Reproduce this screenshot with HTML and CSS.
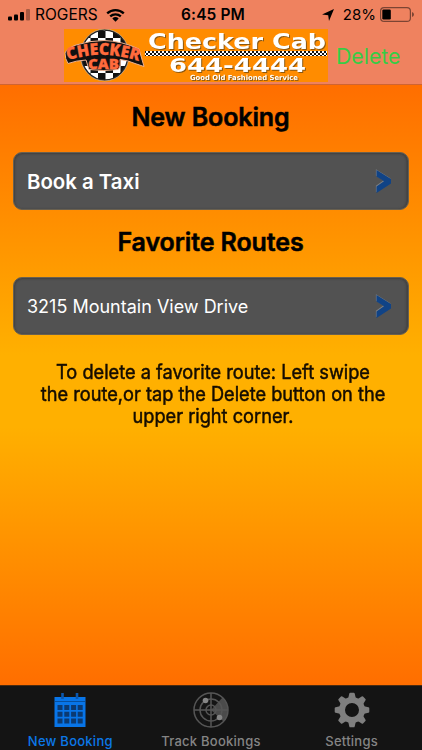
FILE: index.html
```
<!DOCTYPE html>
<html lang="en">
<head>
<meta charset="utf-8">
<title>Checker Cab</title>
<link rel="stylesheet" href="styles.css">
</head>
<body>
<div class="app">
  <header class="top">
    <div class="status">
      <div class="status-left">
        <svg class="signal" width="22" height="12" viewBox="0 0 22 12">
          <rect x="0" y="7.5" width="4" height="4" rx="1"/><rect x="6" y="5.5" width="4" height="6" rx="1"/><rect x="12" y="3" width="4" height="8.5" rx="1"/><rect x="18" y="0" width="4" height="11.5" rx="1" opacity=".3"/>
        </svg>
        <span class="carrier">ROGERS</span>
        <svg class="wifi" width="19" height="14" viewBox="0 0 19 14">
          <path d="M1.2 5.4a12 12 0 0 1 16.6 0M4.2 8.4a7.8 7.8 0 0 1 10.6 0" fill="none" stroke="#000" stroke-width="2.3"/>
          <path d="M6.3 10.4a4.8 4.8 0 0 1 6.4 0L9.5 13.7z"/>
        </svg>
      </div>
      <div class="clock">6:45 PM</div>
      <div class="status-right">
        <svg width="12" height="12" viewBox="0 0 12 12"><path d="M12 0L7 12L6.200 6.200L0 5.400z"/></svg>
        <span class="percent">28%</span>
        <svg class="battery" width="34" height="15" viewBox="0 0 34 15">
          <rect x=".6" y=".6" width="29.800" height="13.800" rx="3.500" fill="none" stroke="#7c4433" stroke-width="1.200"/>
          <rect x="2.300" y="2.500" width="8.500" height="10" rx="1.200"/>
          <path d="M32 5q2 .8 2 2.500t-2 2.500z" fill="#7c4433"/>
        </svg>
      </div>
    </div>
    <div class="nav">
      <svg class="banner" width="264" height="53" viewBox="0 0 264 53">
        <defs>
          <pattern id="flag" width="15" height="14" x="4" y="2" patternUnits="userSpaceOnUse"><rect width="15" height="14" fill="#fff"/><path d="M0 0h7.500v7H0zM7.500 7H15v7H7.500z" fill="#111"/></pattern>
          <pattern id="strip" width="4" height="4" y="22" patternUnits="userSpaceOnUse"><rect width="4" height="4" fill="#fff"/><path d="M0 0h2v2H0zM2 2h2v2H2z" fill="#111"/></pattern>
          <path id="arc" d="M4 31.500Q38 19.500 77 33"/>
        </defs>
        <rect width="264" height="53" fill="#ff8c00"/>
        <ellipse cx="40.700" cy="26" rx="23.400" ry="25" fill="url(#flag)" stroke="#222" stroke-width="1.600"/>
        <ellipse cx="40.700" cy="26" rx="24.300" ry="25.900" fill="none" stroke="#ccc" stroke-width=".5"/>
        <path d="M1 24Q3 19 12 16Q26 11.500 40 11.500Q58 12 75 20L80 37.500L71 34.500Q63 31 56 30.500Q57 38 54 40.500Q40 42.500 25 40.500L22 31Q12 31.500 4 34.500Q1 30 1 24z" fill="#111" stroke="#efb190" stroke-width="1" stroke-linejoin="round"/>
        <g class="badge"><text><textPath href="#arc" textLength="72" lengthAdjust="spacingAndGlyphs">CHECKER</textPath></text><text x="24" y="39.500" class="cab" textLength="31" lengthAdjust="spacingAndGlyphs">CAB</text></g>
        <rect x="81" y="22" width="182" height="5" fill="url(#strip)"/>
        <g class="banner-text">
          <text x="84" y="19.500" class="name" textLength="178" lengthAdjust="spacingAndGlyphs">Checker Cab</text>
          <text x="105" y="42.500" class="phone" textLength="137" lengthAdjust="spacingAndGlyphs">644-4444</text>
          <text x="126" y="51" class="slogan" textLength="108" lengthAdjust="spacingAndGlyphs">Good Old Fashioned Service</text>
        </g>
      </svg>
      <span class="delete">Delete</span>
    </div>
  </header>
  <main class="content">
    <h1 class="heading">New Booking</h1>
    <div class="card"><span class="book">Book a Taxi</span>
      <svg class="chevron" width="17" height="25" viewBox="0 0 17 25"><path d="M1.500 1L16 10V14.500L1.500 24V17.500L9 12.200L1.500 7.500z" fill="#7c8086" transform="translate(-.6 -.7)"/><path d="M1.500 1L16 10V14.500L1.500 24V17.500L9 12.200L1.500 7.500z" fill="#104386"/></svg>
    </div>
    <h2 class="heading">Favorite Routes</h2>
    <div class="card"><span class="route">3215 Mountain View Drive</span>
      <svg class="chevron" width="17" height="25" viewBox="0 0 17 25"><path d="M1.500 1L16 10V14.500L1.500 24V17.500L9 12.200L1.500 7.500z" fill="#7c8086" transform="translate(-.6 -.7)"/><path d="M1.500 1L16 10V14.500L1.500 24V17.500L9 12.200L1.500 7.500z" fill="#104386"/></svg>
    </div>
    <p class="hint">To delete a favorite route: Left swipe<br>the route,or tap the Delete button on the<br>upper right corner.</p>
  </main>
  <footer class="tabs">
    <div class="tab active">
      <svg width="36" height="36" viewBox="0 0 36 36">
        <path d="M2.500 5h31v30h-31z" fill="#0875e8"/><path d="M3 9.500h30" stroke="#064f9e" stroke-width="1"/>
        <path d="M10.500 1v6M25 1v6" stroke="#0a58b0" stroke-width="2.600"/>
        <g fill="#0b3a72">
          <path d="M5.500 13h5v5h-5zM12.300 13h5v5h-5zM19.100 13h5v5h-5zM25.700 13h5v5h-5zM5.500 19.800h5v5h-5zM12.300 19.800h5v5h-5zM19.100 19.800h5v5h-5zM25.700 19.800h5v5h-5zM5.500 26.600h5v5h-5zM12.300 26.600h5v5h-5zM19.100 26.600h5v5h-5zM25.700 26.600h5v5h-5z"/>
        </g>
      </svg>
      <span>New Booking</span>
    </div>
    <div class="tab">
      <svg width="36" height="36" viewBox="0 0 36 36">
        <path d="M18 18L29.500 5.500A17 17 0 0 1 30.500 29.500z" fill="#4b4b4b"/>
        <g fill="none" stroke="#555" stroke-width="1.500"><circle cx="18" cy="18" r="17"/><circle cx="18" cy="18" r="11"/><circle cx="18" cy="18" r="5"/><path d="M1 18h34M18 1v34"/></g>
        <circle cx="12.500" cy="8.500" r="2.800" fill="#858585"/><circle cx="26.500" cy="25.500" r="2.800" fill="#858585"/>
      </svg>
      <span>Track Bookings</span>
    </div>
    <div class="tab">
      <svg width="36" height="36" viewBox="-18 -18 36 36">
        <defs><path id="tooth" d="M-4.200-10L-2.700-16.400Q-2.500-17.300-1.700-17.300H1.700Q2.500-17.300 2.700-16.400L4.200-10z"/></defs>
        <g fill="#7f7f7f"><use href="#tooth"/><use href="#tooth" transform="rotate(45)"/><use href="#tooth" transform="rotate(90)"/><use href="#tooth" transform="rotate(135)"/><use href="#tooth" transform="rotate(180)"/><use href="#tooth" transform="rotate(225)"/><use href="#tooth" transform="rotate(270)"/><use href="#tooth" transform="rotate(315)"/></g>
        <circle r="10" fill="none" stroke="#7f7f7f" stroke-width="6"/>
      </svg>
      <span>Settings</span>
    </div>
  </footer>
</div>
</body>
</html>
```
FILE: styles.css
```
* { box-sizing: border-box; }
body { margin: 0; font-family: Inter, "Liberation Sans", sans-serif; }
svg { display: block; flex: none; }
.app { width: 422px; height: 750px; display: flex; flex-direction: column; overflow: hidden; }
.top { height: 85px; background: #ef825f; border-bottom: 1px solid #cf6432; }
.status { height: 29px; display: grid; grid-template-columns: 1fr auto 1fr; align-items: center; padding: 0 8px 0 8px; font-size: 15px; line-height: 28px; color: #000; }
.status-left, .status-right { display: flex; align-items: center; }
.status-right { justify-content: flex-end; }
.carrier { margin-left: 5px; font-size: 15.5px; }
.wifi { margin-left: 8px; }
.clock { font-size: 15.5px; font-weight: 600; letter-spacing: .1px; padding-left: 4px; }
.percent { margin: 0 4px 0 9px; }
.nav { display: flex; padding-left: 64px; }
.banner { font-family: "DejaVu Sans", sans-serif; font-weight: bold; }
.banner-text text { fill: #fff; filter: drop-shadow(1px 1px .5px #8c5810); }
.name { font-size: 21px; }
.phone { font-size: 19px; }
.slogan { font-size: 7px; }
.badge { font: 900 16.5px "Open Sans", sans-serif; fill: #ff6a3c; stroke: #ff6a3c; stroke-width: .3px; }
.cab { font-size: 14px; }
.delete { margin: 13px 0 0 8px; font-size: 21.3px; line-height: 28px; color: #36cc45; }
.content { height: 600px; display: flex; flex-direction: column; background: linear-gradient(#ff6e00, #ffb000 45%, #ffb000 57%, #ff6e00); padding: 0 13px; }
.heading { margin: 0; text-align: center; font-weight: 600; font-size: 25px; line-height: 34px; height: 67px; padding: 15px 1px 0 0; color: #000; letter-spacing: -.1px; -webkit-text-stroke: .5px #000; }
.card { height: 58px; display: flex; align-items: center; justify-content: space-between; padding: 0 16px 0 13px; background: #525252; border: 1px solid #69604f; border-radius: 9px; box-shadow: inset 1px 1px 2px #404040, inset -2px 0 2px #444; color: #fff; }
.book { font-size: 20.4px; font-weight: 600; }
.route { font-size: 18px; }
.hint { margin: 26px 0 0 4px; font-size: 20px; line-height: 22px; text-align: center; color: #140c00; white-space: nowrap; transform: scaleX(.91); -webkit-text-stroke: .5px #140c00; }
.tabs { height: 65px; display: grid; grid-template-columns: 1fr 1fr 1fr; background: #141414; border-top: 1px solid #4b2b10; }
.tab { display: flex; flex-direction: column; align-items: center; padding-top: 6px; font-size: 13px; line-height: 18px; font-weight: 500; color: #858585; }
.tab span { margin-top: 4px; white-space: nowrap; letter-spacing: .25px; }
.active { color: #0b78e8; }
```
